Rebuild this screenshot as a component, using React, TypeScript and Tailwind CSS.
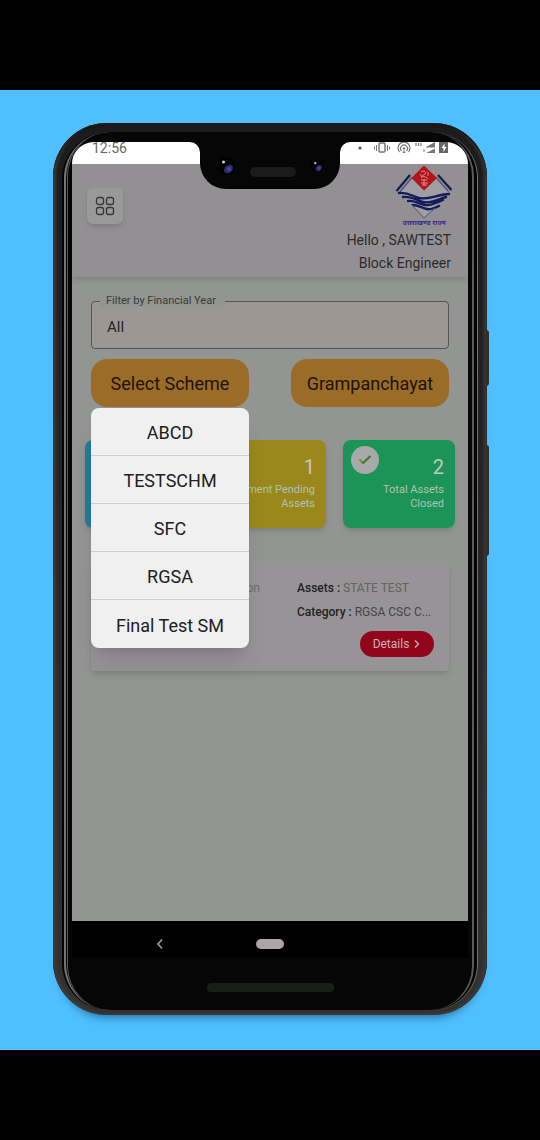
import type { ReactNode } from "react";

const schemes = ["ABCD", "TESTSCHM", "SFC", "RGSA", "Final Test SM"];

function StateEmblem() {
  return (
    <svg viewBox="0 0 60 54" className="h-[54px] w-[60px]" aria-hidden="true" fill="none">
      <path d="M6 27 18 13 30 26 43 13 55 27 30 53Z" fill="#a19ea2" />
      <path d="M2.500 26 16 10M57.500 25 44 10" stroke="#141c55" strokeWidth="2.200" />
      <path d="M6 27 18 12.500M54.500 26.500 42 12.500" stroke="#4a5080" strokeWidth="1.200" />
      <path d="M30 0.500 43 13 30 25.500 17.500 13Z" fill="#b3141a" />
      <path
        d="M27 7c3-2 6 0 4 2l-4 3c3-1 6 0 7 2M27 15h6M27 18h7M28 20h5M30 14v7M26 9l2 3M34 7v4"
        stroke="#d58d8d"
        strokeWidth="1"
      />
      <path
        d="M5 28c9-1 13 3 20 5 9 2 17-3 30-4M9 32c8-1 13 3 20 5 9 2 16-3 23-5M14 36c6-1 11 3 17 4 7 1 13-3 18-5M19 40c5 0 9 3 14 4 4 1 8-1 12-3"
        stroke="#141c5c"
        strokeWidth="2.400"
        strokeLinecap="round"
      />
      <path d="M17 39 30 53 41 43" stroke="#4f5276" strokeWidth="1" />
    </svg>
  );
}

function StatusIcons() {
  return (
    <svg viewBox="0 0 94 14" className="h-[14px] w-[94px]" aria-hidden="true" fill="none" stroke="#777">
      <circle cx="4" cy="6" r="1.600" fill="#555" stroke="none" />
      <rect x="23" y="1" width="6" height="9" rx="1" strokeWidth="1.500" />
      <path d="M20.500 3v6M31.500 3v6M18.500 4.500v3M33.500 4.500v3" />
      <path d="M43.500 10a6 6 0 1 1 9 0M45.500 9a3.500 3.500 0 1 1 5 0" strokeWidth="1.200" />
      <circle cx="48" cy="6.500" r="1.200" fill="#777" stroke="none" />
      <path d="M46.500 11 48 8 49.500 11Z" fill="#777" stroke="none" />
      <path d="M60 1v3M62.500 1v3M65 1v3" strokeWidth="1.200" />
      <path d="M79 0V5.500H69ZM79 6.500V11H70Z" fill="#777" stroke="none" />
      <path d="M68 7v3" />
      <path d="M83 0h9v11h-9Z" fill="#666" stroke="none" />
      <path d="M88.500 1.500 85.500 6h2v4l3-5h-2Z" fill="#fff" stroke="none" />
    </svg>
  );
}

function Lens({ small }: { small?: boolean }) {
  return (
    <svg viewBox="0 0 20 20" className={small ? "h-[14px] w-[14px]" : "h-[20px] w-[20px]"} aria-hidden="true">
      <circle cx="10" cy="10" r="9" fill="#010103" />
      <ellipse cx="12.500" cy="13" rx="5" ry="3.800" transform="rotate(-40 12.500 13)" fill="#2d2964" />
      <circle cx="13" cy="13" r="2.200" fill="#4d459b" />
      <circle cx="7.500" cy="6" r="1.600" fill="#c7cbd0" />
    </svg>
  );
}

function StatCard({ tone, count, label, icon }: { tone: string; count?: string; label?: string; icon?: ReactNode }) {
  return (
    <article className={`relative h-[88px] rounded-lg pt-[15px] pr-[11px] text-right shadow-md ${tone}`}>
      {icon}
      {count && <p className="text-xl leading-6 text-[#c2c8c2]">{count}</p>}
      {label && <p className="pt-1 pl-3 text-[11px] leading-[14px] text-[#aec3b0]">{label}</p>}
    </article>
  );
}

function Home() {
  return (
    <>
      <header className="relative flex h-[113px] items-start justify-between bg-[#939093] pt-px pr-[17px] pl-[15px] shadow-md">
        <button
          type="button"
          aria-label="Menu"
          className="mt-[23px] flex h-9 w-9 items-center justify-center rounded-md bg-[#989998] shadow-md"
        >
          <svg viewBox="0 0 20 20" className="h-5 w-5" fill="none" stroke="#373737" strokeWidth="1.300" aria-hidden="true">
            <rect x="1.500" y="1.500" width="7" height="7" rx="2" />
            <rect x="11.500" y="1.500" width="7" height="7" rx="2" />
            <rect x="1.500" y="11.500" width="7" height="7" rx="2" />
            <rect x="11.500" y="11.500" width="7" height="7" rx="2" />
          </svg>
        </button>
        <div className="flex flex-col items-end">
          <div className="-mr-[3px] flex flex-col items-center">
            <StateEmblem />
            <span className="text-[7px] leading-[8px] font-bold text-[#3a2a88]">उत्तराखण्ड राज्य</span>
          </div>
          <p className="mt-[2px] text-sm leading-[23px] text-[#2c2b2c]">Hello , SAWTEST</p>
          <p className="text-sm leading-[23px] text-[#2c2b2c]">Block Engineer</p>
        </div>
      </header>

      <main className="flex-1 bg-[#929591] px-[19px] pt-[18px]">
        <fieldset className="rounded-[4px] border border-[#555355] bg-[#9d9794]">
          <legend className="ml-2 bg-[#929591] pr-[9px] pl-[6px] text-[11px] leading-[12px] text-[#3a3a3a]">
            <label htmlFor="year">Filter by Financial Year</label>
          </legend>
          <select
            id="year"
            className="block h-[41px] w-full appearance-none bg-transparent pl-[15px] text-[15px] text-[#252525]"
          >
            <option>All</option>
          </select>
        </fieldset>

        <div className="mt-[10px] flex justify-between">
          <div className="relative">
            <button
              type="button"
              aria-expanded="true"
              className="h-12 w-[158px] rounded-2xl bg-[#9b6c27] pt-[2px] text-lg text-[#1d1409]"
            >
              Select Scheme
            </button>
            <ul className="absolute top-[49px] left-0 z-10 w-[158px] overflow-hidden rounded-lg bg-[#f0f0f0] shadow-xl">
              {schemes.map((name) => (
                <li key={name} className="h-12 border-b border-[#cdcdcd] last:border-b-0">
                  <button type="button" className="h-full w-full pt-[3px] text-lg text-[#202020]">
                    {name}
                  </button>
                </li>
              ))}
            </ul>
          </div>
          <button type="button" className="h-12 w-[158px] rounded-2xl bg-[#9b6c27] pt-[2px] text-lg text-[#1d1409]">
            Grampanchayat
          </button>
        </div>

        <section className="-mx-[6px] mt-[33px] grid grid-cols-3 gap-[17px]">
          <StatCard tone="bg-[#237a9b]" />
          <StatCard tone="bg-[#9a881d]" count="1" label="Payment Pending Assets" />
          <StatCard
            tone="bg-[#1d9457]"
            count="2"
            label="Total Assets Closed"
            icon={
              <span className="absolute top-[6px] left-2 flex h-7 w-7 items-center justify-center rounded-full bg-[#a8aaa7]">
                <svg viewBox="0 0 14 12" className="h-3 w-[14px]" fill="none" strokeWidth="2.200" aria-hidden="true">
                  <path d="M1.500 5.500 5 9" stroke="#8b8630" />
                  <path d="M4.500 9.500 12.500 2" stroke="#3b7a35" />
                </svg>
              </span>
            }
          />
        </section>

        <article className="mt-[34px] grid h-[109px] grid-cols-[191px_1fr] rounded-[4px] bg-[#979497] pt-[14px] pr-[15px] pl-[15px] text-xs leading-6 text-[#444] shadow-md">
          <p className="pr-[37px] text-right text-[#6b6b6b]">Description</p>
          <div className="flex min-w-0 flex-col">
            <p className="whitespace-nowrap text-[#626262]">
              <span className="font-medium text-[#222]">Assets : </span>STATE TEST
            </p>
            <p className="whitespace-nowrap">
              <span className="font-medium text-[#222]">Category : </span>RGSA CSC C...
            </p>
            <button
              type="button"
              className="mt-[7px] flex h-[26px] w-[74px] items-center justify-center gap-1 self-end rounded-full bg-[#92061b] text-xs text-[#c9b3b5]"
            >
              Details
              <svg viewBox="0 0 8 10" className="h-[10px] w-2" fill="none" stroke="#c9b3b5" strokeWidth="1.300" aria-hidden="true">
                <path d="m2 1.500 3.500 3.500L2 8.500" />
              </svg>
            </button>
          </div>
        </article>
      </main>
    </>
  );
}

export default function App() {
  return (
    <div className="flex min-h-screen flex-col bg-black py-[90px] font-['Roboto','Noto_Sans',sans-serif]">
      <div className="flex flex-1 flex-col bg-[#4fbfff] px-[53px] pt-[33px] pb-[35px]">
        <div className="relative flex flex-1 flex-col rounded-[54px] bg-linear-to-b from-[#1b1c1b] to-[#333230] pt-[9px] pr-[9px] pb-[5px] pl-[9px] shadow-[0_10px_10px_-8px_#236d9a,inset_0_2px_2px_#171817,inset_3px_-1px_3px_#3d3c3b,inset_-3px_0_3px_#3d3c3b]">
          <span className="absolute top-[207px] -right-[2px] h-[56px] w-[3px] rounded-r-sm bg-[#2f2f2e]" />
          <span className="absolute top-[322px] -right-[2px] h-[111px] w-[3px] rounded-r-sm bg-[#2f2f2e]" />
          <div className="flex flex-1 flex-col rounded-[47px] bg-[#030303] pl-[2px]">
            <div className="flex flex-1 flex-col rounded-[46px] border-r border-l-2 border-[#767476] pr-[3px] pl-px">
              <div className="flex flex-1 flex-col rounded-[44px] border-r-2 border-l border-[#5c5b5c] bg-[#060606] px-1 pt-[10px]">
                <div className="relative flex flex-1 flex-col">
                  <div className="flex h-[22px] justify-between">
                    <div className="h-[22px] w-[128px] rounded-tl-[34px] rounded-tr-[16px] bg-white pl-5">
                      <time className="block text-sm leading-[13px] text-[#666]">12:56</time>
                    </div>
                    <div className="flex h-[22px] w-[128px] rounded-tl-[16px] rounded-tr-[34px] bg-white pl-4">
                      <StatusIcons />
                    </div>
                  </div>
                  <div className="absolute top-0 left-1/2 z-10 flex h-[47px] w-[140px] -translate-x-1/2 items-center justify-between rounded-b-[26px] bg-[#060606] px-4 pb-0">
                    <Lens />
                    <span className="mt-3 h-[10px] w-[46px] rounded-full bg-[#1b1b1b]" />
                    <Lens small />
                  </div>
                  <Home />
                  <nav className="grid h-[37px] grid-cols-3 items-center bg-black px-[22px] pt-2">
                    <button type="button" aria-label="Back" className="flex justify-center pl-[14px]">
                      <svg viewBox="0 0 8 12" className="h-3 w-2" fill="none" stroke="#969496" strokeWidth="1.800" aria-hidden="true">
                        <path d="M6 1.500 2 6l4 4.500" />
                      </svg>
                    </button>
                    <button type="button" aria-label="Home" className="h-[10px] w-7 justify-self-center rounded-full bg-[#aaa6aa]" />
                  </nav>
                </div>
                <div className="flex h-[52px] justify-center pt-[25px]">
                  <span className="h-[9px] w-[127px] rounded-sm bg-[#1b1d1b]" />
                </div>
              </div>
            </div>
          </div>
        </div>
      </div>
    </div>
  );
}
